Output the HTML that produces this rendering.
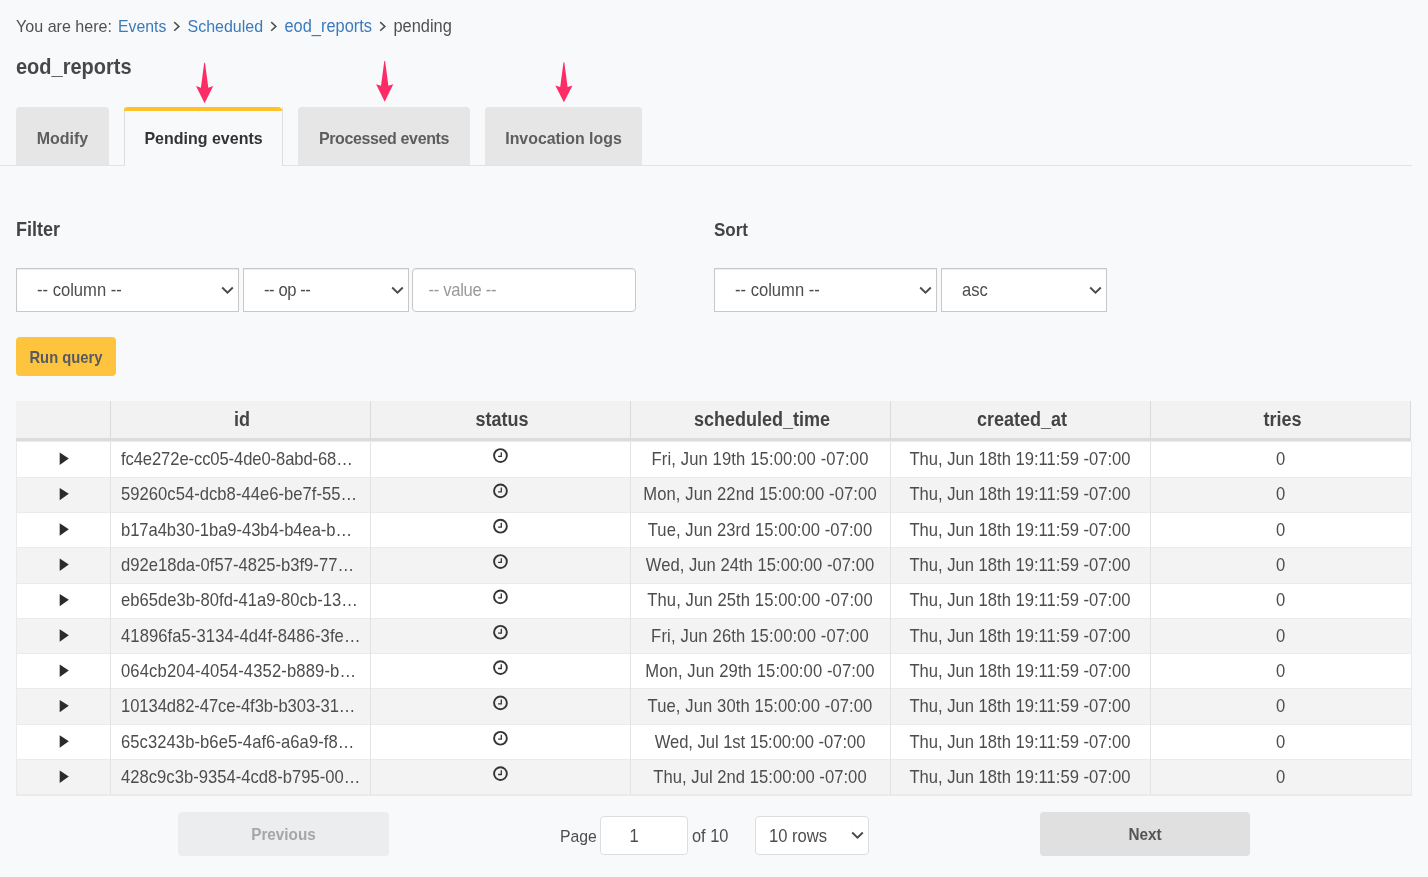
<!DOCTYPE html>
<html><head><meta charset="utf-8"><style>
html,body{margin:0;padding:0;}
body{width:1428px;height:877px;overflow:hidden;background:#f8f9fb;position:relative;font-family:"Liberation Sans",sans-serif;color:#4d4d4d;}
.wrap{position:absolute;left:0;top:0;width:1428px;height:877px;will-change:transform;}
.a{position:absolute;white-space:nowrap;line-height:1;}
.r{position:absolute;}
.s{position:absolute;overflow:visible;}
.sel{box-sizing:border-box;background:#fff;border:1px solid #c8c8c8;box-shadow:inset 0 1px 1px rgba(0,0,0,.075);}
.pg{box-sizing:border-box;background:#fff;border:1px solid #dddddd;border-radius:4px;}
</style></head><body><div class="wrap">
<div class="a" style="left:16px;top:18.00px;font-size:16.1px;color:#505050;transform:scaleY(1.08);transform-origin:0 14px;">You are here:</div>
<div class="a" style="left:118px;top:19.00px;font-size:15.8px;color:#3b7abb;transform:scaleY(1.08);transform-origin:0 13px;">Events</div>
<div class="a" style="left:187.5px;top:19.00px;font-size:16.0px;color:#3b7abb;transform:scaleY(1.08);transform-origin:0 13px;">Scheduled</div>
<div class="a" style="left:284.5px;top:18.00px;font-size:16.4px;color:#3b7abb;transform:scaleY(1.08);transform-origin:0 14px;">eod_reports</div>
<div class="a" style="left:393.5px;top:18.00px;font-size:16.4px;color:#505050;transform:scaleY(1.08);transform-origin:0 14px;">pending</div>
<svg class="s" style="left:173.4px;top:21px" width="8" height="11" viewBox="0 0 8 11"><path d="M1.2 1.1L5.9 5.4L1.2 9.7" fill="none" stroke="#4d4d4d" stroke-width="1.5"/></svg>
<svg class="s" style="left:270.4px;top:21px" width="8" height="11" viewBox="0 0 8 11"><path d="M1.2 1.1L5.9 5.4L1.2 9.7" fill="none" stroke="#4d4d4d" stroke-width="1.5"/></svg>
<svg class="s" style="left:379.2px;top:21px" width="8" height="11" viewBox="0 0 8 11"><path d="M1.2 1.1L5.9 5.4L1.2 9.7" fill="none" stroke="#4d4d4d" stroke-width="1.5"/></svg>
<div class="a" style="left:16px;top:57.00px;font-size:20px;color:#474747;transform:scaleY(1.08);transform-origin:0 17px;font-weight:bold;">eod_reports</div>
<div class="r" style="left:0px;top:165px;width:1412px;height:1px;background:#e3e3e3"></div>
<div class="r" style="left:16px;top:107px;width:93px;height:58px;background:#e6e6e6;border-radius:4px 4px 0 0"></div>
<div class="a" style="left:16px;top:131.00px;font-size:16px;color:#5d5d5d;transform:scaleY(1.08);transform-origin:0 13px;font-weight:bold;width:93px;text-align:center;">Modify</div>
<div class="r" style="left:124px;top:107px;width:159px;height:59px;background:#f8f9fb;box-sizing:border-box;border-left:1px solid #dedede;border-right:1px solid #dedede;"></div>
<div class="r" style="left:124px;top:107px;width:158px;height:4px;background:#ffc228;border-radius:4px 4px 0 0"></div>
<div class="a" style="left:124px;top:131.00px;font-size:16px;color:#333333;transform:scaleY(1.08);transform-origin:0 13px;font-weight:bold;width:159px;text-align:center;">Pending events</div>
<div class="r" style="left:298px;top:107px;width:172px;height:58px;background:#e6e6e6;border-radius:4px 4px 0 0"></div>
<div class="a" style="left:298px;top:131.00px;font-size:16px;color:#5d5d5d;transform:scaleY(1.08);transform-origin:0 13px;font-weight:bold;width:172px;text-align:center;letter-spacing:-0.37px;">Processed events</div>
<div class="r" style="left:485px;top:107px;width:157px;height:58px;background:#e6e6e6;border-radius:4px 4px 0 0"></div>
<div class="a" style="left:485px;top:131.00px;font-size:15.9px;color:#5d5d5d;transform:scaleY(1.08);transform-origin:0 13px;font-weight:bold;width:157px;text-align:center;">Invocation logs</div>
<svg class="s" style="left:0;top:0" width="700" height="110"><path d="M204.2 62.8 L205.0 62.8 L208.3 87.7 L213.2 86.1 L204.6 103.3 L196.0 86.1 L200.9 87.7 Z" fill="#fd2c67"/><path d="M384.3 61 L385.1 61 L388.4 85.8 L393.3 84.2 L384.7 101.7 L376.1 84.2 L381.0 85.8 Z" fill="#fd2c67"/><path d="M563.5 62.2 L564.3 62.2 L567.6 87.0 L572.5 85.4 L563.9 102.3 L555.3 85.4 L560.2 87.0 Z" fill="#fd2c67"/></svg>
<div class="a" style="left:16px;top:221.00px;font-size:18px;color:#444444;transform:scaleY(1.08);transform-origin:0 15px;font-weight:bold;">Filter</div>
<div class="a" style="left:714px;top:222.00px;font-size:17px;color:#444444;transform:scaleY(1.08);transform-origin:0 14px;font-weight:bold;">Sort</div>
<div class="r sel" style="left:16px;top:268px;width:223px;height:44px"></div>
<div class="a" style="left:37px;top:283.00px;font-size:16.6px;color:#4d4d4d;transform:scaleY(1.08);transform-origin:0 13px;">-- column --</div>
<svg class="s" style="left:221px;top:286px" width="13" height="9" viewBox="0 0 13 9"><path d="M1.2 1.5L6.5 6.6L11.8 1.5" fill="none" stroke="#4a4a4a" stroke-width="1.9"/></svg>
<div class="r sel" style="left:243px;top:268px;width:166px;height:44px"></div>
<div class="a" style="left:264px;top:283.00px;font-size:16.6px;color:#4d4d4d;transform:scaleY(1.08);transform-origin:0 13px;letter-spacing:-0.42px;">-- op --</div>
<svg class="s" style="left:391px;top:286px" width="13" height="9" viewBox="0 0 13 9"><path d="M1.2 1.5L6.5 6.6L11.8 1.5" fill="none" stroke="#4a4a4a" stroke-width="1.9"/></svg>
<div class="r sel" style="left:714px;top:268px;width:223px;height:44px"></div>
<div class="a" style="left:735px;top:283.00px;font-size:16.6px;color:#4d4d4d;transform:scaleY(1.08);transform-origin:0 13px;">-- column --</div>
<svg class="s" style="left:919px;top:286px" width="13" height="9" viewBox="0 0 13 9"><path d="M1.2 1.5L6.5 6.6L11.8 1.5" fill="none" stroke="#4a4a4a" stroke-width="1.9"/></svg>
<div class="r sel" style="left:941px;top:268px;width:166px;height:44px"></div>
<div class="a" style="left:962px;top:283.00px;font-size:16.6px;color:#4d4d4d;transform:scaleY(1.08);transform-origin:0 13px;">asc</div>
<svg class="s" style="left:1089px;top:286px" width="13" height="9" viewBox="0 0 13 9"><path d="M1.2 1.5L6.5 6.6L11.8 1.5" fill="none" stroke="#4a4a4a" stroke-width="1.9"/></svg>
<div class="r sel" style="left:412px;top:268px;width:224px;height:44px;border-radius:4px"></div>
<div class="a" style="left:428.5px;top:283.00px;font-size:16.6px;color:#9a9a9a;transform:scaleY(1.08);transform-origin:0 13px;letter-spacing:-0.3px;">-- value --</div>
<div class="r" style="left:16px;top:337px;width:100px;height:39px;background:#fec43d;border-radius:4px"></div>
<div class="a" style="left:16px;top:351.00px;font-size:14.8px;color:#565a62;transform:scaleY(1.08);transform-origin:0 12px;font-weight:bold;width:100px;text-align:center;">Run query</div>
<div class="r" style="left:16px;top:401px;width:1395px;height:37px;background:#f2f2f2"></div>
<div class="a" style="left:112px;top:411.00px;font-size:18px;color:#444444;transform:scaleY(1.08);transform-origin:0 15px;font-weight:bold;width:260px;text-align:center;">id</div>
<div class="a" style="left:372px;top:411.00px;font-size:18px;color:#444444;transform:scaleY(1.08);transform-origin:0 15px;font-weight:bold;width:260px;text-align:center;">status</div>
<div class="a" style="left:632px;top:411.00px;font-size:18px;color:#444444;transform:scaleY(1.08);transform-origin:0 15px;font-weight:bold;width:260px;text-align:center;">scheduled_time</div>
<div class="a" style="left:892px;top:411.00px;font-size:18px;color:#444444;transform:scaleY(1.08);transform-origin:0 15px;font-weight:bold;width:260px;text-align:center;">created_at</div>
<div class="a" style="left:1152px;top:411.00px;font-size:18px;color:#444444;transform:scaleY(1.08);transform-origin:0 15px;font-weight:bold;width:261px;text-align:center;">tries</div>
<div class="r" style="left:110px;top:401px;width:1px;height:37px;background:#dadada"></div>
<div class="r" style="left:370px;top:401px;width:1px;height:37px;background:#dadada"></div>
<div class="r" style="left:630px;top:401px;width:1px;height:37px;background:#dadada"></div>
<div class="r" style="left:890px;top:401px;width:1px;height:37px;background:#dadada"></div>
<div class="r" style="left:1150px;top:401px;width:1px;height:37px;background:#dadada"></div>
<div class="r" style="left:1410px;top:401px;width:1px;height:37px;background:#dadada"></div>
<div class="r" style="left:16px;top:438px;width:1395px;height:3px;background:#dcdcdc"></div>
<div class="r" style="left:16px;top:441px;width:1396px;height:1px;background:#ebebeb"></div>
<div class="r" style="left:16px;top:442px;width:1396px;height:35px;background:#ffffff"></div>
<div class="r" style="left:16px;top:477px;width:1396px;height:1px;background:#ebebeb"></div>
<svg class="s" style="left:59px;top:451px" width="11" height="16" viewBox="0 0 11 16"><path d="M0.7 1.60 L9.8 7.50 L0.7 14.00 Z" fill="#2b2b2b"/></svg>
<div class="a" style="left:121px;top:452.00px;font-size:16.6px;color:#4d4d4d;transform:scaleY(1.08);transform-origin:0 13px;letter-spacing:-0.095px;">fc4e272e-cc05-4de0-8abd-68&hellip;</div>
<svg class="s" style="left:492px;top:446px" width="18" height="18" viewBox="0 0 18 18"><circle cx="8.46" cy="9.54" r="6.4" fill="none" stroke="#343434" stroke-width="1.9"/><path d="M9.30 6.14V10.44H6.10" fill="none" stroke="#343434" stroke-width="1.3"/></svg>
<div class="a" style="left:630px;top:452.00px;font-size:16.6px;color:#4d4d4d;transform:scaleY(1.08);transform-origin:0 13px;width:260px;text-align:center;letter-spacing:0.139px;">Fri, Jun 19th 15:00:00 -07:00</div>
<div class="a" style="left:890px;top:452.00px;font-size:16.6px;color:#4d4d4d;transform:scaleY(1.08);transform-origin:0 13px;width:260px;text-align:center;">Thu, Jun 18th 19:11:59 -07:00</div>
<div class="a" style="left:1150px;top:452.00px;font-size:16.6px;color:#4d4d4d;transform:scaleY(1.08);transform-origin:0 13px;width:261px;text-align:center;">0</div>
<div class="r" style="left:16px;top:478px;width:1396px;height:34px;background:#f3f3f3"></div>
<div class="r" style="left:16px;top:512px;width:1396px;height:1px;background:#ebebeb"></div>
<svg class="s" style="left:59px;top:486px" width="11" height="16" viewBox="0 0 11 16"><path d="M0.7 1.93 L9.8 7.83 L0.7 14.33 Z" fill="#2b2b2b"/></svg>
<div class="a" style="left:121px;top:487.00px;font-size:16.6px;color:#4d4d4d;transform:scaleY(1.08);transform-origin:0 13px;letter-spacing:0.037px;">59260c54-dcb8-44e6-be7f-55&hellip;</div>
<svg class="s" style="left:492px;top:481px" width="18" height="18" viewBox="0 0 18 18"><circle cx="8.46" cy="9.88" r="6.4" fill="none" stroke="#343434" stroke-width="1.9"/><path d="M9.30 6.48V10.78H6.10" fill="none" stroke="#343434" stroke-width="1.3"/></svg>
<div class="a" style="left:630px;top:487.00px;font-size:16.6px;color:#4d4d4d;transform:scaleY(1.08);transform-origin:0 13px;width:260px;text-align:center;letter-spacing:0.096px;">Mon, Jun 22nd 15:00:00 -07:00</div>
<div class="a" style="left:890px;top:487.00px;font-size:16.6px;color:#4d4d4d;transform:scaleY(1.08);transform-origin:0 13px;width:260px;text-align:center;">Thu, Jun 18th 19:11:59 -07:00</div>
<div class="a" style="left:1150px;top:487.00px;font-size:16.6px;color:#4d4d4d;transform:scaleY(1.08);transform-origin:0 13px;width:261px;text-align:center;">0</div>
<div class="r" style="left:16px;top:513px;width:1396px;height:34px;background:#ffffff"></div>
<div class="r" style="left:16px;top:547px;width:1396px;height:1px;background:#ebebeb"></div>
<svg class="s" style="left:59px;top:522px" width="11" height="16" viewBox="0 0 11 16"><path d="M0.7 1.26 L9.8 7.16 L0.7 13.66 Z" fill="#2b2b2b"/></svg>
<div class="a" style="left:121px;top:523.00px;font-size:16.6px;color:#4d4d4d;transform:scaleY(1.08);transform-origin:0 13px;letter-spacing:-0.056px;">b17a4b30-1ba9-43b4-b4ea-b&hellip;</div>
<svg class="s" style="left:492px;top:517px" width="18" height="18" viewBox="0 0 18 18"><circle cx="8.46" cy="9.22" r="6.4" fill="none" stroke="#343434" stroke-width="1.9"/><path d="M9.30 5.82V10.12H6.10" fill="none" stroke="#343434" stroke-width="1.3"/></svg>
<div class="a" style="left:630px;top:523.00px;font-size:16.6px;color:#4d4d4d;transform:scaleY(1.08);transform-origin:0 13px;width:260px;text-align:center;letter-spacing:0.061px;">Tue, Jun 23rd 15:00:00 -07:00</div>
<div class="a" style="left:890px;top:523.00px;font-size:16.6px;color:#4d4d4d;transform:scaleY(1.08);transform-origin:0 13px;width:260px;text-align:center;">Thu, Jun 18th 19:11:59 -07:00</div>
<div class="a" style="left:1150px;top:523.00px;font-size:16.6px;color:#4d4d4d;transform:scaleY(1.08);transform-origin:0 13px;width:261px;text-align:center;">0</div>
<div class="r" style="left:16px;top:548px;width:1396px;height:35px;background:#f3f3f3"></div>
<div class="r" style="left:16px;top:583px;width:1396px;height:1px;background:#ebebeb"></div>
<svg class="s" style="left:59px;top:557px" width="11" height="16" viewBox="0 0 11 16"><path d="M0.7 1.59 L9.8 7.49 L0.7 13.99 Z" fill="#2b2b2b"/></svg>
<div class="a" style="left:121px;top:558.00px;font-size:16.6px;color:#4d4d4d;transform:scaleY(1.08);transform-origin:0 13px;letter-spacing:0.019px;">d92e18da-0f57-4825-b3f9-77&hellip;</div>
<svg class="s" style="left:492px;top:552px" width="18" height="18" viewBox="0 0 18 18"><circle cx="8.46" cy="9.56" r="6.4" fill="none" stroke="#343434" stroke-width="1.9"/><path d="M9.30 6.16V10.46H6.10" fill="none" stroke="#343434" stroke-width="1.3"/></svg>
<div class="a" style="left:630px;top:558.00px;font-size:16.6px;color:#4d4d4d;transform:scaleY(1.08);transform-origin:0 13px;width:260px;text-align:center;letter-spacing:0.032px;">Wed, Jun 24th 15:00:00 -07:00</div>
<div class="a" style="left:890px;top:558.00px;font-size:16.6px;color:#4d4d4d;transform:scaleY(1.08);transform-origin:0 13px;width:260px;text-align:center;">Thu, Jun 18th 19:11:59 -07:00</div>
<div class="a" style="left:1150px;top:558.00px;font-size:16.6px;color:#4d4d4d;transform:scaleY(1.08);transform-origin:0 13px;width:261px;text-align:center;">0</div>
<div class="r" style="left:16px;top:584px;width:1396px;height:34px;background:#ffffff"></div>
<div class="r" style="left:16px;top:618px;width:1396px;height:1px;background:#ebebeb"></div>
<svg class="s" style="left:59px;top:592px" width="11" height="16" viewBox="0 0 11 16"><path d="M0.7 1.92 L9.8 7.82 L0.7 14.32 Z" fill="#2b2b2b"/></svg>
<div class="a" style="left:121px;top:593.00px;font-size:16.6px;color:#4d4d4d;transform:scaleY(1.08);transform-origin:0 13px;letter-spacing:0.023px;">eb65de3b-80fd-41a9-80cb-13&hellip;</div>
<svg class="s" style="left:492px;top:587px" width="18" height="18" viewBox="0 0 18 18"><circle cx="8.46" cy="9.90" r="6.4" fill="none" stroke="#343434" stroke-width="1.9"/><path d="M9.30 6.50V10.80H6.10" fill="none" stroke="#343434" stroke-width="1.3"/></svg>
<div class="a" style="left:630px;top:593.00px;font-size:16.6px;color:#4d4d4d;transform:scaleY(1.08);transform-origin:0 13px;width:260px;text-align:center;letter-spacing:0.111px;">Thu, Jun 25th 15:00:00 -07:00</div>
<div class="a" style="left:890px;top:593.00px;font-size:16.6px;color:#4d4d4d;transform:scaleY(1.08);transform-origin:0 13px;width:260px;text-align:center;">Thu, Jun 18th 19:11:59 -07:00</div>
<div class="a" style="left:1150px;top:593.00px;font-size:16.6px;color:#4d4d4d;transform:scaleY(1.08);transform-origin:0 13px;width:261px;text-align:center;">0</div>
<div class="r" style="left:16px;top:619px;width:1396px;height:34px;background:#f3f3f3"></div>
<div class="r" style="left:16px;top:653px;width:1396px;height:1px;background:#ebebeb"></div>
<svg class="s" style="left:59px;top:628px" width="11" height="16" viewBox="0 0 11 16"><path d="M0.7 1.25 L9.8 7.15 L0.7 13.65 Z" fill="#2b2b2b"/></svg>
<div class="a" style="left:121px;top:629.00px;font-size:16.6px;color:#4d4d4d;transform:scaleY(1.08);transform-origin:0 13px;letter-spacing:0.090px;">41896fa5-3134-4d4f-8486-3fe&hellip;</div>
<svg class="s" style="left:492px;top:623px" width="18" height="18" viewBox="0 0 18 18"><circle cx="8.46" cy="9.24" r="6.4" fill="none" stroke="#343434" stroke-width="1.9"/><path d="M9.30 5.84V10.14H6.10" fill="none" stroke="#343434" stroke-width="1.3"/></svg>
<div class="a" style="left:630px;top:629.00px;font-size:16.6px;color:#4d4d4d;transform:scaleY(1.08);transform-origin:0 13px;width:260px;text-align:center;letter-spacing:0.161px;">Fri, Jun 26th 15:00:00 -07:00</div>
<div class="a" style="left:890px;top:629.00px;font-size:16.6px;color:#4d4d4d;transform:scaleY(1.08);transform-origin:0 13px;width:260px;text-align:center;">Thu, Jun 18th 19:11:59 -07:00</div>
<div class="a" style="left:1150px;top:629.00px;font-size:16.6px;color:#4d4d4d;transform:scaleY(1.08);transform-origin:0 13px;width:261px;text-align:center;">0</div>
<div class="r" style="left:16px;top:654px;width:1396px;height:34px;background:#ffffff"></div>
<div class="r" style="left:16px;top:688px;width:1396px;height:1px;background:#ebebeb"></div>
<svg class="s" style="left:59px;top:663px" width="11" height="16" viewBox="0 0 11 16"><path d="M0.7 1.58 L9.8 7.48 L0.7 13.98 Z" fill="#2b2b2b"/></svg>
<div class="a" style="left:121px;top:664.00px;font-size:16.6px;color:#4d4d4d;transform:scaleY(1.08);transform-origin:0 13px;letter-spacing:0.140px;">064cb204-4054-4352-b889-b&hellip;</div>
<svg class="s" style="left:492px;top:658px" width="18" height="18" viewBox="0 0 18 18"><circle cx="8.46" cy="9.58" r="6.4" fill="none" stroke="#343434" stroke-width="1.9"/><path d="M9.30 6.18V10.48H6.10" fill="none" stroke="#343434" stroke-width="1.3"/></svg>
<div class="a" style="left:630px;top:664.00px;font-size:16.6px;color:#4d4d4d;transform:scaleY(1.08);transform-origin:0 13px;width:260px;text-align:center;letter-spacing:0.118px;">Mon, Jun 29th 15:00:00 -07:00</div>
<div class="a" style="left:890px;top:664.00px;font-size:16.6px;color:#4d4d4d;transform:scaleY(1.08);transform-origin:0 13px;width:260px;text-align:center;">Thu, Jun 18th 19:11:59 -07:00</div>
<div class="a" style="left:1150px;top:664.00px;font-size:16.6px;color:#4d4d4d;transform:scaleY(1.08);transform-origin:0 13px;width:261px;text-align:center;">0</div>
<div class="r" style="left:16px;top:689px;width:1396px;height:35px;background:#f3f3f3"></div>
<div class="r" style="left:16px;top:724px;width:1396px;height:1px;background:#ebebeb"></div>
<svg class="s" style="left:59px;top:698px" width="11" height="16" viewBox="0 0 11 16"><path d="M0.7 1.91 L9.8 7.81 L0.7 14.31 Z" fill="#2b2b2b"/></svg>
<div class="a" style="left:121px;top:699.00px;font-size:16.6px;color:#4d4d4d;transform:scaleY(1.08);transform-origin:0 13px;letter-spacing:-0.066px;">10134d82-47ce-4f3b-b303-31&hellip;</div>
<svg class="s" style="left:492px;top:693px" width="18" height="18" viewBox="0 0 18 18"><circle cx="8.46" cy="9.92" r="6.4" fill="none" stroke="#343434" stroke-width="1.9"/><path d="M9.30 6.52V10.82H6.10" fill="none" stroke="#343434" stroke-width="1.3"/></svg>
<div class="a" style="left:630px;top:699.00px;font-size:16.6px;color:#4d4d4d;transform:scaleY(1.08);transform-origin:0 13px;width:260px;text-align:center;letter-spacing:0.111px;">Tue, Jun 30th 15:00:00 -07:00</div>
<div class="a" style="left:890px;top:699.00px;font-size:16.6px;color:#4d4d4d;transform:scaleY(1.08);transform-origin:0 13px;width:260px;text-align:center;">Thu, Jun 18th 19:11:59 -07:00</div>
<div class="a" style="left:1150px;top:699.00px;font-size:16.6px;color:#4d4d4d;transform:scaleY(1.08);transform-origin:0 13px;width:261px;text-align:center;">0</div>
<div class="r" style="left:16px;top:725px;width:1396px;height:34px;background:#ffffff"></div>
<div class="r" style="left:16px;top:759px;width:1396px;height:1px;background:#ebebeb"></div>
<svg class="s" style="left:59px;top:734px" width="11" height="16" viewBox="0 0 11 16"><path d="M0.7 1.24 L9.8 7.14 L0.7 13.64 Z" fill="#2b2b2b"/></svg>
<div class="a" style="left:121px;top:735.00px;font-size:16.6px;color:#4d4d4d;transform:scaleY(1.08);transform-origin:0 13px;letter-spacing:0.070px;">65c3243b-b6e5-4af6-a6a9-f8&hellip;</div>
<svg class="s" style="left:492px;top:729px" width="18" height="18" viewBox="0 0 18 18"><circle cx="8.46" cy="9.26" r="6.4" fill="none" stroke="#343434" stroke-width="1.9"/><path d="M9.30 5.86V10.16H6.10" fill="none" stroke="#343434" stroke-width="1.3"/></svg>
<div class="a" style="left:630px;top:735.00px;font-size:16.6px;color:#4d4d4d;transform:scaleY(1.08);transform-origin:0 13px;width:260px;text-align:center;letter-spacing:-0.041px;">Wed, Jul 1st 15:00:00 -07:00</div>
<div class="a" style="left:890px;top:735.00px;font-size:16.6px;color:#4d4d4d;transform:scaleY(1.08);transform-origin:0 13px;width:260px;text-align:center;">Thu, Jun 18th 19:11:59 -07:00</div>
<div class="a" style="left:1150px;top:735.00px;font-size:16.6px;color:#4d4d4d;transform:scaleY(1.08);transform-origin:0 13px;width:261px;text-align:center;">0</div>
<div class="r" style="left:16px;top:760px;width:1396px;height:34px;background:#f3f3f3"></div>
<div class="r" style="left:16px;top:794px;width:1396px;height:1px;background:#ebebeb"></div>
<svg class="s" style="left:59px;top:769px" width="11" height="16" viewBox="0 0 11 16"><path d="M0.7 1.57 L9.8 7.47 L0.7 13.97 Z" fill="#2b2b2b"/></svg>
<div class="a" style="left:121px;top:770.00px;font-size:16.6px;color:#4d4d4d;transform:scaleY(1.08);transform-origin:0 13px;letter-spacing:0.020px;">428c9c3b-9354-4cd8-b795-00&hellip;</div>
<svg class="s" style="left:492px;top:764px" width="18" height="18" viewBox="0 0 18 18"><circle cx="8.46" cy="9.60" r="6.4" fill="none" stroke="#343434" stroke-width="1.9"/><path d="M9.30 6.20V10.50H6.10" fill="none" stroke="#343434" stroke-width="1.3"/></svg>
<div class="a" style="left:630px;top:770.00px;font-size:16.6px;color:#4d4d4d;transform:scaleY(1.08);transform-origin:0 13px;width:260px;text-align:center;letter-spacing:0.041px;">Thu, Jul 2nd 15:00:00 -07:00</div>
<div class="a" style="left:890px;top:770.00px;font-size:16.6px;color:#4d4d4d;transform:scaleY(1.08);transform-origin:0 13px;width:260px;text-align:center;">Thu, Jun 18th 19:11:59 -07:00</div>
<div class="a" style="left:1150px;top:770.00px;font-size:16.6px;color:#4d4d4d;transform:scaleY(1.08);transform-origin:0 13px;width:261px;text-align:center;">0</div>
<div class="r" style="left:110px;top:442px;width:1px;height:353px;background:#e3e3e3"></div>
<div class="r" style="left:370px;top:442px;width:1px;height:353px;background:#e3e3e3"></div>
<div class="r" style="left:630px;top:442px;width:1px;height:353px;background:#e3e3e3"></div>
<div class="r" style="left:890px;top:442px;width:1px;height:353px;background:#e3e3e3"></div>
<div class="r" style="left:1150px;top:442px;width:1px;height:353px;background:#e3e3e3"></div>
<div class="r" style="left:16px;top:442px;width:1px;height:354px;background:#e9eaeb"></div>
<div class="r" style="left:1411px;top:442px;width:1px;height:354px;background:#ebebeb"></div>
<div class="r" style="left:16px;top:795px;width:1396px;height:1px;background:#e9eaeb"></div>
<div class="r" style="left:178px;top:812px;width:211px;height:44px;background:#ecedef;border-radius:4px"></div>
<div class="a" style="left:178px;top:827.00px;font-size:15.3px;color:#a6a6a6;transform:scaleY(1.08);transform-origin:0 13px;font-weight:bold;width:211px;text-align:center;">Previous</div>
<div class="r" style="left:1040px;top:812px;width:210px;height:44px;background:#dfe0df;border-radius:4px"></div>
<div class="a" style="left:1040px;top:827.00px;font-size:15.3px;color:#555555;transform:scaleY(1.08);transform-origin:0 13px;font-weight:bold;width:210px;text-align:center;">Next</div>
<div class="a" style="left:560px;top:829.00px;font-size:15.8px;color:#4d4d4d;transform:scaleY(1.08);transform-origin:0 13px;">Page</div>
<div class="r pg" style="left:600px;top:816px;width:88px;height:39px"></div>
<div class="a" style="left:629.5px;top:829.00px;font-size:16.6px;color:#4d4d4d;transform:scaleY(1.08);transform-origin:0 13px;">1</div>
<div class="a" style="left:692px;top:828.00px;font-size:16.4px;color:#4d4d4d;transform:scaleY(1.08);transform-origin:0 14px;">of 10</div>
<div class="r pg" style="left:755px;top:816px;width:114px;height:39px"></div>
<div class="a" style="left:769px;top:829.00px;font-size:16.6px;color:#4d4d4d;transform:scaleY(1.08);transform-origin:0 13px;">10 rows</div>
<svg class="s" style="left:851px;top:831px" width="13" height="9" viewBox="0 0 13 9"><path d="M1.2 1.5L6.5 6.6L11.8 1.5" fill="none" stroke="#4a4a4a" stroke-width="1.9"/></svg>
</div></body></html>
